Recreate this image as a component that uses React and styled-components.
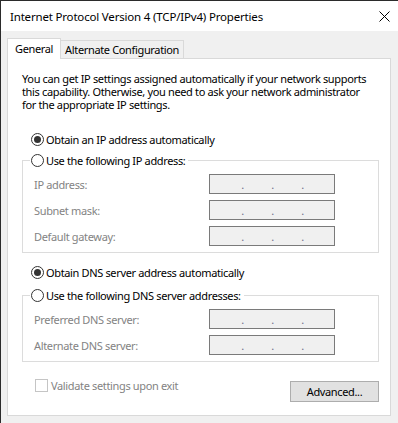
import React from 'react';
import styled, { createGlobalStyle } from 'styled-components';

const GlobalStyle = createGlobalStyle`
  html, body {
    margin: 0;
    padding: 0;
    background: #ffffff;
  }
  body {
    font-family: "Noto Sans", "Open Sans", sans-serif;
    font-size: 11px;
    letter-spacing: -0.35px;
    color: #000000;
  }
  * {
    box-sizing: border-box;
  }
`;

const ipRows = [
  { label: 'IP address:' },
  { label: 'Subnet mask:' },
  { label: 'Default gateway:' },
];

const dnsRows = [
  { label: 'Preferred DNS server:' },
  { label: 'Alternate DNS server:' },
];

const Radio = ({ checked, children }) => (
  <RadioLabel>
    <RadioCircle checked={checked} />
    <span>{children}</span>
  </RadioLabel>
);

const IpField = () => (
  <IpBox>
    <Octet />
    <Dot>.</Dot>
    <Octet />
    <Dot>.</Dot>
    <Octet />
    <Dot>.</Dot>
    <Octet />
  </IpBox>
);

const FieldRows = ({ rows }) => (
  <Rows>
    {rows.map((row) => (
      <Row key={row.label}>
        <FieldLabel>{row.label}</FieldLabel>
        <IpField />
      </Row>
    ))}
  </Rows>
);

const App = () => {
  return (
    <>
      <GlobalStyle />
      <Window>
        <TitleBar>
          <Title>Internet Protocol Version 4 (TCP/IPv4) Properties</Title>
          <CloseButton aria-label="Close">
            <svg width="11" height="11" viewBox="0 0 11 11">
              <path d="M0.5 0.5 L10.5 10.5 M10.5 0.5 L0.5 10.5" stroke="#000" strokeWidth="1" fill="none" />
            </svg>
          </CloseButton>
        </TitleBar>

        <Body>
          <TabBar>
            <Tab active>General</Tab>
            <Tab>Alternate Configuration</Tab>
          </TabBar>

          <Panel>
            <Description>
              <Line>You can get IP settings assigned automatically if your network supports</Line>
              <Line>this capability. Otherwise, you need to ask your network administrator</Line>
              <Line>for the appropriate IP settings.</Line>
            </Description>

            <RadioRow top={20}>
              <Radio checked>Obtain an IP address automatically</Radio>
            </RadioRow>

            <Group top={5}>
              <Legend>
                <Radio>Use the following IP address:</Radio>
              </Legend>
              <FieldRows rows={ipRows} />
            </Group>

            <RadioRow top={11}>
              <Radio checked>Obtain DNS server address automatically</Radio>
            </RadioRow>

            <Group top={7}>
              <Legend>
                <Radio>Use the following DNS server addresses:</Radio>
              </Legend>
              <FieldRows rows={dnsRows} />
            </Group>

            <BottomRow>
              <CheckLabel>
                <CheckBox />
                <span>Validate settings upon exit</span>
              </CheckLabel>
              <Button>Advanced...</Button>
            </BottomRow>
          </Panel>
        </Body>
      </Window>
    </>
  );
};

const Window = styled.div`
  width: 398px;
  height: 423px;
  display: flex;
  flex-direction: column;
  border-top: 1px solid #2b2b2b;
  border-left: 1px solid #2b2b2b;
  overflow: hidden;
`;

const TitleBar = styled.div`
  height: 30px;
  flex: none;
  display: flex;
  align-items: center;
  justify-content: space-between;
  background: #ffffff;
  padding: 0 8px 0 9px;
`;

const Title = styled.div`
  font-size: 11.5px;
  letter-spacing: -0.18px;
  white-space: nowrap;
`;

const CloseButton = styled.div`
  width: 11px;
  height: 11px;
  display: flex;
  margin-top: 1px;
`;

const Body = styled.div`
  flex: 1;
  display: flex;
  flex-direction: column;
  background: #f0f0f0;
  padding: 7px 7px 7px 6px;
`;

const TabBar = styled.div`
  height: 21px;
  margin-bottom: -1px;
  display: flex;
  align-items: flex-end;
  position: relative;
  z-index: 1;
`;

const Tab = styled.div`
  height: ${(p) => (p.active ? '21px' : '19px')};
  padding: ${(p) => (p.active ? '0 7px 2px 7px' : '0 4px 0 4px')};
  display: flex;
  align-items: center;
  white-space: nowrap;
  background: ${(p) => (p.active ? '#ffffff' : '#f0f0f0')};
  border: 1px solid #d9d9d9;
  border-bottom: ${(p) => (p.active ? 'none' : '1px solid #d9d9d9')};
  border-left: ${(p) => (p.active ? '1px solid #d9d9d9' : 'none')};
`;

const Panel = styled.div`
  flex: 1;
  display: flex;
  flex-direction: column;
  background: #ffffff;
  border: 1px solid #d9d9d9;
  padding: 13px 11px 0 14px;
`;

const Description = styled.div`
  line-height: 13px;
`;

const Line = styled.div`
  white-space: nowrap;
  height: 13px;
`;

const RadioRow = styled.div`
  margin-top: ${(p) => p.top}px;
  padding-left: 9px;
  height: 16px;
  display: flex;
  align-items: center;
`;

const RadioLabel = styled.label`
  display: flex;
  align-items: center;
  gap: 2px;
  height: 16px;
  white-space: nowrap;
`;

const RadioCircle = styled.span`
  width: 13px;
  height: 13px;
  border-radius: 50%;
  border: 1px solid #333333;
  background: #ffffff;
  display: flex;
  align-items: center;
  justify-content: center;
  flex: none;

  &::after {
    content: '';
    width: 7px;
    height: 7px;
    border-radius: 50%;
    background: ${(p) => (p.checked ? '#333333' : 'transparent')};
  }
`;

const Group = styled.fieldset`
  margin: ${(p) => p.top}px 0 0 0;
  padding: 6px 6px 6px 7px;
  border: 1px solid #dcdcdc;
  min-width: 0;
`;

const Legend = styled.legend`
  padding: 0 3px 0 1px;
  height: 16px;
`;

const Rows = styled.div`
  display: flex;
  flex-direction: column;
  gap: 6px;
  padding-left: 4px;
`;

const Row = styled.div`
  display: grid;
  grid-template-columns: 175px 126px;
  align-items: center;
  height: 20px;
`;

const FieldLabel = styled.span`
  color: #838383;
  white-space: nowrap;
`;

const IpBox = styled.div`
  height: 20px;
  display: flex;
  align-items: center;
  padding-left: 3px;
  background: #f0f0f0;
  border: 1px solid #7a7a7a;
  color: #6d6d8a;
`;

const Octet = styled.span`
  width: 29px;
  flex: none;
`;

const Dot = styled.span`
  width: 1px;
  flex: none;
  display: flex;
  justify-content: center;
  line-height: 18px;
  margin-top: 1px;
`;

const BottomRow = styled.div`
  display: flex;
  justify-content: space-between;
  align-items: flex-start;
`;

const CheckLabel = styled.label`
  margin-top: 17px;
  padding-left: 13px;
  display: flex;
  align-items: center;
  gap: 3px;
  height: 13px;
  color: #838383;
  white-space: nowrap;
`;

const CheckBox = styled.span`
  width: 13px;
  height: 13px;
  flex: none;
  border: 1px solid #c5c5c5;
  background: #ffffff;
`;

const Button = styled.button`
  margin-top: 19px;
  width: 89px;
  height: 21px;
  padding: 0;
  font: inherit;
  letter-spacing: -0.35px;
  color: #000000;
  background: #e1e1e1;
  border: 1px solid #adadad;
`;

export default App;
